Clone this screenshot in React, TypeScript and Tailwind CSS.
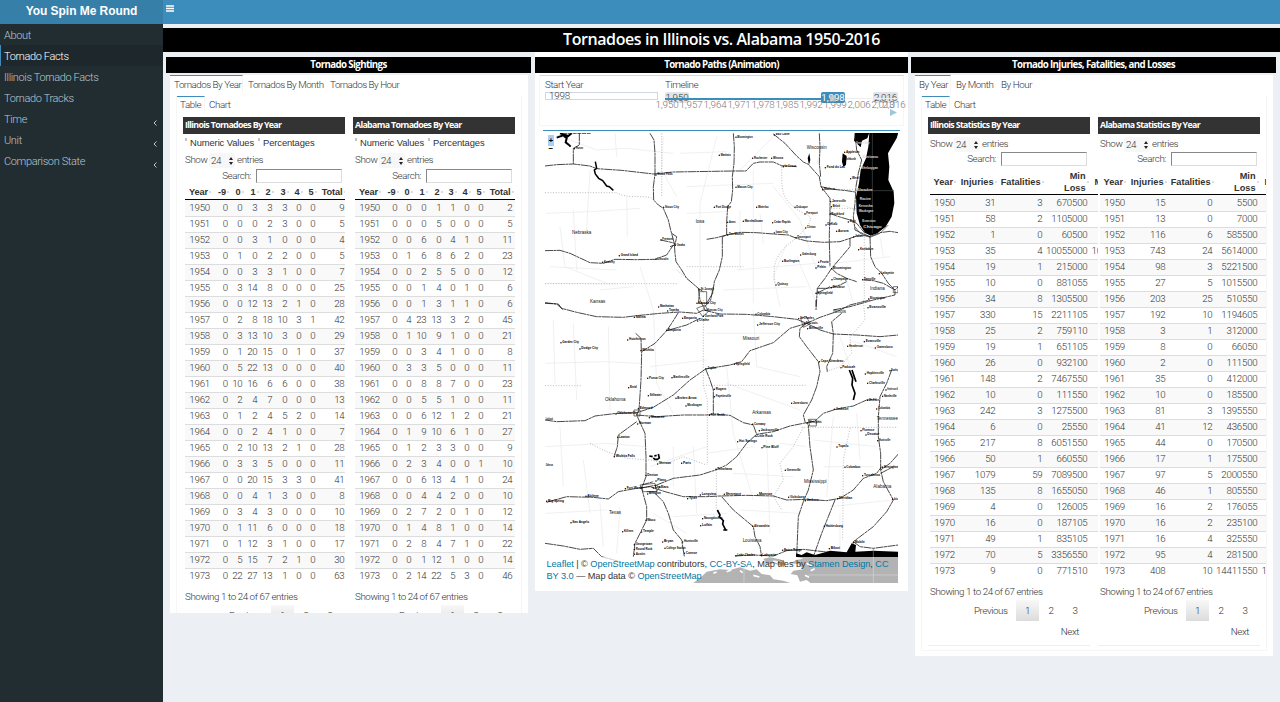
import React from "react";

const TORNADO_IL = `1950 0 0 3 3 3 0 0 9
1951 0 0 0 2 3 0 0 5
1952 0 0 3 1 0 0 0 4
1953 0 1 0 2 2 0 0 5
1954 0 0 3 3 1 0 0 7
1955 0 3 14 8 0 0 0 25
1956 0 0 12 13 2 1 0 28
1957 0 2 8 18 10 3 1 42
1958 0 3 13 10 3 0 0 29
1959 0 1 20 15 0 1 0 37
1960 0 5 22 13 0 0 0 40
1961 0 10 16 6 6 0 0 38
1962 0 2 4 7 0 0 0 13
1963 0 1 2 4 5 2 0 14
1964 0 0 2 4 1 0 0 7
1965 0 2 10 13 2 1 0 28
1966 0 3 3 5 0 0 0 11
1967 0 0 20 15 3 3 0 41
1968 0 0 4 1 3 0 0 8
1969 0 3 4 3 0 0 0 10
1970 0 1 11 6 0 0 0 18
1971 0 1 12 3 1 0 0 17
1972 0 5 15 7 2 1 0 30
1973 0 22 27 13 1 0 0 63`;

const TORNADO_AL = `1950 0 0 0 1 1 0 0 2
1951 0 0 0 5 0 0 0 5
1952 0 0 6 0 4 1 0 11
1953 0 1 6 8 6 2 0 23
1954 0 0 2 5 5 0 0 12
1955 0 0 1 4 0 1 0 6
1956 0 0 1 3 1 1 0 6
1957 0 4 23 13 3 2 0 45
1958 0 1 10 9 1 0 0 21
1959 0 0 3 4 1 0 0 8
1960 0 3 3 5 0 0 0 11
1961 0 0 8 8 7 0 0 23
1962 0 0 5 5 1 0 0 11
1963 0 0 6 12 1 2 0 21
1964 0 1 9 10 6 1 0 27
1965 0 1 2 3 3 0 0 9
1966 0 2 3 4 0 0 1 10
1967 0 0 6 13 4 1 0 24
1968 0 0 4 4 2 0 0 10
1969 0 2 7 2 0 1 0 12
1970 0 1 4 8 1 0 0 14
1971 0 2 8 4 7 1 0 22
1972 0 0 1 12 1 0 0 14
1973 0 2 14 22 5 3 0 46`;

const STATS_IL = `1950 31 3 670500 
1951 58 2 1105000 
1952 1 0 60500 
1953 35 4 10055000 10055
1954 19 1 215000 
1955 10 0 881055 
1956 34 8 1305500 
1957 330 15 2211105 
1958 25 2 759110 
1959 19 1 651105 
1960 26 0 932100 
1961 148 2 7467550 
1962 10 0 111550 
1963 242 3 1275500 
1964 6 0 25550 
1965 217 8 6051550 
1966 50 1 660550 
1967 1079 59 7089500 
1968 135 8 1655050 
1969 4 0 126005 
1970 16 0 187105 
1971 49 1 835105 
1972 70 5 3356550 
1973 9 0 771510 `;

const STATS_AL = `1950 15 0 5500 
1951 13 0 7000 
1952 116 6 585500 
1953 743 24 5614000 
1954 98 3 5221500 
1955 27 5 1015500 
1956 203 25 510550 
1957 192 10 1194605 
1958 3 1 312000 
1959 8 0 66050 
1960 2 0 111500 
1961 35 0 412000 
1962 10 0 185500 
1963 81 3 1395550 
1964 41 12 436500 
1965 44 0 170500 
1966 17 1 175500 
1967 97 5 2000550 
1968 46 1 805550 
1969 16 2 176055 
1970 16 2 235100 
1971 16 4 325550 
1972 95 4 281500 
1973 408 10 14411550 14411`;

const parse = (s: string) => s.split("\n").map((l) => l.split(" "));

const IL_GRID = "grid grid-cols-[25px_18px_14.5px_15px_15px_15px_14px_14px_29px]";
const AL_GRID = "grid grid-cols-[25px_17.5px_14px_15px_15px_14px_14px_14px_29px]";
const STAT_GRID = "grid grid-cols-[25px_40.5px_47px_45px_60px]";

function DataTable(p: { grid: string; heads: string[]; data: string; stats?: boolean }) {
  return (
    <div className={p.stats ? "w-[218px]" : "w-full"}>
      <div
        className={`${p.grid} items-center border-b border-black pt-[2px] font-['Liberation_Sans',sans-serif] text-[9.2px] leading-[12px] font-bold text-[#333] ${
          p.stats ? "h-[27px] tracking-[0px]" : "h-[17px] tracking-[-0.1px]"
        }`}
      >
        {p.heads.map((h, i) => (
          <div
            key={h}
            className={`flex items-center whitespace-pre ${
              i === 4 && p.stats ? "justify-start pl-[7px] text-left" : "justify-end text-right"
            }`}
          >
            <span>{h}</span>
            <span className="-mr-px ml-[1px] h-[2px] w-[2px] shrink-0 bg-[#dcdce4]" />
          </div>
        ))}
      </div>
      {parse(p.data).map((r, i) => (
        <div
          key={r[0]}
          className={`${p.grid} h-4 text-[9.7px] tracking-[-0.2px] ${
            i ? "border-t border-[#ddd] leading-[14px]" : "leading-[16px]"
          } ${i % 2 ? "bg-white" : "bg-[#f9f9f9]"}`}
        >
          {r.map((c, j) => (
            <span key={j} className={j === 4 && p.stats ? "pl-[4px] text-left" : "text-right"}>
              {c}
            </span>
          ))}
        </div>
      ))}
    </div>
  );
}

function Panel(p: {
  title: string;
  grid: string;
  heads: string[];
  data: string;
  stats?: boolean;
  clip: string;
}) {
  return (
    <section className="w-[162px] shrink-0 border-b border-[#eee]">
      <h3 className="h-[17px] bg-[#333] pl-[2px] font-['Open_Sans','Noto_Sans',sans-serif] text-[8.8px] leading-[16px] font-bold tracking-[-0.65px] whitespace-nowrap text-white">
        {p.title}
      </h3>
      {!p.stats && (
        <div className="flex h-[17px] pl-[2px] font-['Liberation_Sans',sans-serif] text-[9.4px] leading-[17px] font-normal tracking-[-0.1px] whitespace-nowrap text-[#333]">
          <i className="mt-[4px] mr-[3px] h-[3px] w-[2px] bg-[#c4c4c4]" />
          <span className="w-[68px]">Numeric Values</span>
          <i className="mt-[4px] mr-[3px] h-[3px] w-[2px] bg-[#c4c4c4]" />
          <span>Percentages</span>
        </div>
      )}
      <div className={`flex pl-[2px] leading-[14px] ${p.stats ? "mt-[3px] h-[15px]" : "mt-[2px] h-[16px]"}`}>
        <span className="w-6">Show</span>
        <span className="flex h-[15px] w-[26px] items-center rounded-[3px] bg-[#f7f7f7] pl-[2px]">
          24
          <svg className="ml-auto mr-[2px]" width="4" height="8" viewBox="0 0 4 8">
            <path d="M2 0 4 3H0zM2 8 0 5h4z" fill="#222" />
          </svg>
        </span>
        <span className="ml-[2px]">entries</span>
      </div>
      <div className={`flex justify-end pr-[3px] leading-[14px] ${p.stats ? "h-[15px]" : "h-[14px]"}`}>
        <span className="mr-[5px]">Search:</span>
        <span className="h-[14px] w-[86px] border border-t-[#888] border-r-[#ddd] border-b-[#ddd] border-l-[#888] bg-white" />
      </div>
      <div className={`relative ml-[2px] overflow-hidden ${p.stats ? "mt-[1px]" : ""} ${p.clip}`}>
        <DataTable grid={p.grid} heads={p.heads} data={p.data} stats={p.stats} />
      </div>
      <div className="h-[66px] pt-[6px] pl-[2px] leading-[14px]">
        Showing 1 to 24 of 67 entries
        <div className="mt-px flex h-[21px] items-center">
          <span className="ml-[44px] w-[42px]">Previous</span>
          <span className="flex h-[21px] w-[23px] items-center justify-center bg-linear-to-b from-[#f8f8f8] to-[#dcdcdc]">
            1
          </span>
          <span className="w-6 text-center">2</span>
          <span className="w-6 text-center">3</span>
        </div>
        <div className="pt-[4px] pr-[11px] text-right">Next</div>
      </div>
    </section>
  );
}

const LEVELS = ["Year", "-9", "0", "1", "2", "3", "4", "5", "Total"];
const STATS = ["Year", "Injuries", "Fatalities", "Min\nLoss", "Max"];

function InnerTabs(p: { children: React.ReactNode; wide: string }) {
  return (
    <div className={`mt-[3px] ml-[6px] border border-t-0 border-[#f6f6f6] ${p.wide}`}>
      <div className="flex h-[21px] leading-[16px]">
        <span className="h-[18px] w-[28px] border-t border-r border-t-[#3c8dbc] border-r-[#f4f4f4] pl-[3px]">Table</span>
        <span className="pt-px pl-[4px]">Chart</span>
      </div>
      <div className="flex gap-2 pl-[6px]">{p.children}</div>
    </div>
  );
}

/* Road, border and label data are in units of a third of a pixel. */
const ROADS_N = [
  "15,288 50,284 100,282 150,288 170,296 245,301 340,312 400,306 520,304 580,303 618,303 640,280 660,276 700,276 725,287 770,290",
  "118,190 118,225 100,235 100,282",
  "330,190 342,210 345,250 345,312 340,350 341,390 355,405 370,415 385,450 392,480 403,520 405,550 408,575 425,600 440,625 475,655 490,665",
  "580,190 583,230 582,280 577,320 578,360 574,395 563,410 560,455 560,495 547,500 547,560 538,600 523,635 518,670 500,700",
  "500,508 530,503 560,495 600,487 650,488 700,492 745,495 770,505 800,513 850,517 900,515 930,505 950,498 975,497 990,500 1020,488 1050,484 1075,488",
  "15,542 60,541 90,550 150,578 190,580 225,568 290,569 345,568 380,555 400,525",
  "700,192 735,220 770,258 790,276 805,283 820,300 838,320 843,350 870,385 870,440 868,490 868,515 870,590",
  "838,190 840,230 838,280 842,320",
  "843,350 880,358 920,362 945,366",
  "870,430 890,438 930,450 950,460 975,490",
  "930,505 930,530 905,560 875,595 855,625 832,655 828,720",
  "875,595 890,610 920,625 950,635",
  "832,655 865,655 900,645 920,635",
  "990,500 992,560 1005,590 1025,610 1045,640 1065,660",
  "830,670 870,650",
  "970,630 1000,632 1030,640 1065,660 1075,650",
  "880,720 930,710 1000,690 1065,675 1065,660",
  "945,190 950,240 965,270 955,310 948,350 945,400 940,440 945,480 990,500",
  "475,655 480,690 495,720 M518,660 512,690 490,715",
  "15,698 50,702 70,720",
  "362,510 385,515 405,520 M395,490 410,500 405,525 390,530",
];
const ROADS_S = [
  "15,10 55,12 65,25 110,37 170,50 250,52 290,47 360,40 420,36 470,40 490,30",
  "490,30 540,42 620,43 700,50 770,58 800,70",
  "415,38 395,70 380,92 345,130 305,155 303,240 297,330 290,345 315,400 318,470 318,530 305,565 320,620 320,660 300,700 285,730 280,770",
  "480,55 440,75 380,92 M287,100 303,115 304,155",
  "15,360 50,365 135,362 165,348 230,340 290,338 340,322 400,285 450,240 497,207 570,195 605,185 630,152 700,128 750,85 800,70 840,52 890,35 930,15 990,0",
  "290,345 350,350 430,345 500,345 520,342 570,346 610,368 640,375 650,403 700,395 750,378 790,370 825,363 850,340 890,327 940,318 980,300 1010,297",
  "497,207 510,240 520,270 520,342 M650,403 620,430 590,470 560,495 527,510 480,525 400,535 350,555 300,565",
  "20,607 80,590 160,592 205,597 235,575 290,565 330,560 375,575 430,590 500,590 540,588 620,586 700,588 740,600 800,598 860,602 900,595 940,570 970,535 1010,520 1025,500",
  "290,365 235,405 232,440 222,470",
  "345,580 370,605 385,640 400,690 425,720 433,770",
  "800,70 780,85 778,110 800,140 835,185 840,215 830,260 815,300 790,345 795,365 805,375 810,440 820,510 805,570 790,605 775,650 770,770",
  "800,70 840,90 880,102 950,105 1020,110 1075,105 M828,0 828,20 M905,40 875,65 880,102 878,160 860,200 862,215",
  "1055,210 1040,250 1020,290 1015,350 1015,410 1022,460 1022,510 1030,545 1060,600 1040,635 1000,680 940,725",
  "1075,462 1050,490 1022,510 M1022,520 1060,500",
  "545,590 580,630 640,680 645,710 660,740 665,770",
  "885,600 865,650 845,700 820,770",
  "15,730 70,738 120,748 160,745 185,770 240,785",
  "585,768 640,765 700,768 740,752 790,748 850,755 900,760",
  "940,725 960,740 1000,745 1075,735",
  "305,555 340,545 M320,575 350,575 360,560",
];
const MINOR_N = "M50,195 170,240 260,235 400,250 M20,430 150,425 300,415 M60,470 75,590 200,640 M30,590 230,600 M225,190 230,260 M150,300 140,480 M260,380 262,500 M370,200 365,300 410,380 M420,250 560,245 M440,430 560,425 M440,350 700,340 M640,300 640,700 M700,350 780,450 830,600 M590,600 830,580 M700,200 600,300 M530,200 480,400 480,640 M740,520 700,620 720,710 M15,640 230,642 M890,400 950,420 M850,220 830,280 M880,580 1050,560 M920,630 940,700 M1020,500 1030,560 M600,420 600,600 M660,430 670,520 M770,560 830,700 M100,420 110,600 M300,590 340,720 M550,660 800,650 M180,660 280,650";
const MINOR_S = "M40,60 45,250 M100,70 110,300 M205,80 210,330 M15,190 200,185 300,190 M330,200 500,180 M340,30 350,250 400,340 M15,440 200,430 320,440 M60,380 70,560 M130,480 150,640 M180,610 190,740 M240,620 230,760 M330,500 500,440 M400,440 400,560 M460,440 470,640 M560,200 580,400 640,600 M640,30 650,200 780,230 M500,100 740,100 M560,250 780,330 M680,420 690,700 M720,430 800,440 M820,420 1010,440 M880,350 860,590 M900,110 930,200 M930,120 1070,170 M950,340 960,480 M850,500 1000,500 M870,620 1060,600 M900,640 900,760 M15,640 200,630 M400,650 560,640 M340,640 440,700 M500,460 640,440 M580,520 760,530 M600,630 780,640";
const DOTTED_N = "M15,368H230M365,190V380M440,590H610M15,641H410M873,415H950M973,500V690M230,368C260,390 330,370 340,390M725,290C725,360 725,380 760,410S830,430 800,470S740,520 720,550S700,600 705,640M880,358 960,360M410,600 470,650";
const DOTTED_S = "M15,257H125M490,256H800M490,0V256L502,300V495M529,510V630M785,382H1075M930,385 910,480 908,720M790,382 760,440 720,490 730,540 700,590 725,630 M200,455 260,475 330,480 380,490 430,470 500,495M150,430 200,455M970,0 975,60 930,110 935,160 900,200 860,215";

const LABELS_N: [number, number, string, number][] = [
  [105,236,"Huron",22],[590,202,"Bloomington",46],[705,195,"Eau Claire",42],[540,256,"Mankato",30],[640,265,"Rochester",40],[697,265,"Winona",30],[732,290,"La Crosse",34],[590,352,"Mason City",46],[350,315,"Sioux Falls",46],[373,412,"Sioux City",42],[525,412,"Fort Dodge",46],[652,412,"Waterloo",32],[767,412,"Dubuque",34],[565,457,"Ames",20],[612,454,"Marshalltown",54],[700,458,"Cedar Rapids",50],[797,432,"Freeport",34],[799,474,"Clinton",26],[705,489,"Iowa City",36],[770,503,"Davenport",40],[565,495,"Des Moines",44],[365,510,"Fremont",32],[408,526,"Omaha",25],[240,557,"Grand Island",52],[190,577,"Kearney",32],[350,568,"Lincoln",33],[784,555,"Galesburg",42],[730,574,"Burlington",46],[838,577,"Peoria",26],[830,594,"Pekin",26],[877,596,"Bloomington",54],[878,629,"Champaign",44],[876,653,"Decatur",36],[710,645,"Quincy",32],[830,670,"Springfield",46],[916,247,"Appleton",40],[912,269,"Oshkosh",34],[858,293,"Fond du Lac",55],[934,326,"West Bend",44],[850,359,"Madison",34],[874,395,"Janesville",42],[876,410,"Beloit",22],[872,433,"Rockford",38],[860,465,"DeKalb",30],[892,484,"Aurora",32],[927,456,"Elgin",18],[943,501,"Joliet",22],[958,539,"Kankakee",40],[1020,611,"Lafayette",40],[970,629,"Danville",34],[988,687,"Bloomington",45],[986,713,"Evansville",50],[480,660,"St Joseph",40],[473,700,"Kansas City",52],[358,711,"Manhattan",42],
];
const LAKE_LABELS: [number, number, string, number][] = [
  [945,220,"Green Bay",42],[965,264,"Manitowoc",48],[962,296,"Sheboygan",50],[946,362,"Milwaukee",50],[957,390,"Racine",34],[954,411,"Kenosha",42],[954,425,"Waukegan",44],[965,455,"Evanston",40],[968,473,"Chicago",55],
];
const LABELS_S: [number, number, string, number][] = [
  [285,52,"Salina",30],[385,33,"Topeka",30],[430,55,"Emporia",38],[500,31,"Kansas City",46],[492,49,"Overland Park",56],[475,63,"Olathe",30],[650,43,"Columbia",38],[655,75,"Jefferson City",63],[778,56,"St Charles",42],[795,71,"St Louis",36],[805,86,"Belleville",42],[382,91,"Emporia",38],[265,120,"Hutchinson",50],[305,152,"Wichita",34],[65,128,"Garden City",50],[122,147,"Dodge City",50],[325,235,"Ponca City",45],[398,233,"Bartlesville",48],[327,287,"Stillwater",36],[410,295,"Broken Arrow",58],[440,318,"Muskogee",44],[268,263,"Enid",20],[585,193,"Springfield",42],[500,206,"Joplin",26],[525,268,"Rogers",32],[525,290,"Fayetteville",46],[510,346,"Fort Smith",42],[297,326,"Edmond",38],[230,342,"Oklahoma City",62],[295,372,"Norman",36],[330,353,"Shawnee",42],[235,412,"Lawton",32],[225,470,"Wichita Falls",58],[640,373,"Conway",34],[660,392,"Jacksonville",54],[650,409,"Little Rock",46],[595,425,"Hot Springs",54],[668,443,"Pine Bluff",46],[757,310,"Jonesboro",44],[885,328,"Jackson",38],[805,369,"Memphis",38],[840,185,"Cape Girardeau",68],[905,203,"Paducah",38],[978,222,"Hopkinsville",52],[985,250,"Clarksville",48],[1052,212,"Bowling",22],[1040,270,"Hendersonville",34],[1030,289,"Nashville",38],[985,301,"Dickson",30],[1012,327,"Columbia",36],[965,392,"Florence",36],[980,405,"Decatur",36],[1015,422,"Huntsville",34],[893,441,"Tupelo",30],[917,502,"Columbus",42],[738,511,"Greenville",42],[970,527,"Tuscaloosa",48],[1030,502,"Birmingham",44],[530,508,"Texarkana",44],[320,526,"Denton",32],[350,543,"Plano",26],[258,566,"Fort Worth",48],[342,564,"Dallas",42],[325,582,"Arlington",36],[355,492,"Sherman",36],[427,490,"Paris",24],[22,604,"Big Spring",48],[140,589,"Abilene",34],[445,596,"Tyler",24],[483,585,"Longview",44],[555,583,"Shreveport",46],[655,585,"Monroe",40],[748,592,"Vicksburg",44],[798,602,"Jackson",36],[895,596,"Meridian",40],[95,668,"San Angelo",50],[320,661,"Waco",24],[490,656,"Nacogdoches",56],[484,677,"Lufkin",30],[640,679,"Alexandria",46],[855,679,"Hattiesburg",52],[250,695,"Killeen",28],[307,696,"Temple",32],[285,734,"Georgetown",50],[285,749,"Round Rock",50],[285,763,"Austin",28],[370,726,"Bryan",28],[377,745,"College Station",58],[430,726,"Huntsville",42],[435,760,"Conroe",34],[590,767,"Lake Charles",54],[665,766,"Lafayette",42],[730,751,"Baton Rouge",54],[942,728,"Mobile",30],[870,746,"Biloxi",28],[15,360,"Lubbock",22],[15,496,"Odessa",22],[975,125,"Evansville",45],[925,139,"Henderson",42],[1008,144,"Owensboro",48],[1060,598,"Auburn",16],
];
const STATES_N: [number, number, string, number][] = [
  [800,236,"Wisconsin",60],[467,457,"Iowa",26],[96,491,"Nebraska",58],[990,660,"Indiana",44],[150,698,"Kansas",46],
];
const STATES_S: [number, number, string, number][] = [
  [608,118,"Missouri",50],[880,38,"Illinois",38],[195,303,"Oklahoma",62],[637,342,"Arkansas",56],[792,547,"Mississippi",68],[1000,563,"Alabama",54],[207,641,"Texas",36],[608,726,"Louisiana",56],[1010,360,"Tennessee",64],
];

const path = (s: string) => "M" + s;

function Labels({ items, state, fill }: { items: [number, number, string, number][]; state?: boolean; fill?: string }) {
  return (
    <g
      fontFamily="Liberation Sans, sans-serif"
      fontSize={state ? 16 : 11.5}
      fontWeight={state ? 400 : 700}
      fill={fill ?? (state ? "#111" : "#000")}
    >
      {items.map(([x, y, t, w], i) => (
        <g key={i}>
          {!state && !fill && <circle cx={x - 2} cy={y} r="2.2" fill="#000" />}
          <text x={x + (state ? 0 : 2)} y={y + 1} textLength={w} lengthAdjust="spacingAndGlyphs">
            {t}
          </text>
        </g>
      ))}
    </g>
  );
}

function TonerMap() {
  return (
    <svg className="block" width="353" height="450" viewBox="0 0 353 450">
      <rect width="353" height="450" fill="#fff" />
      <g transform="translate(-5 -63) scale(.33333)" fill="none">
        <path d={MINOR_N} stroke="#e9e9e9" strokeWidth="2" />
        <path d={DOTTED_N} stroke="#999" strokeWidth="2" strokeDasharray="3 5" />
        <path
          d="M988,188 985,230 978,265 962,300 957,340 948,380 950,430 960,465 975,488 992,497 1012,490 1037,470 1055,440 1063,400 1061,365 1045,330 1048,290 1044,250 1055,230 1070,205 1075,188zM945,188H988L982,205 966,212 962,232 942,212zM908,250 920,258 918,285 910,290 906,275zM808,250 803,265 807,285 811,270z"
          fill="#000"
        />
        <path d="M997,190V490M948,362H1062" stroke="#465050" strokeWidth="2" />
        <path d="M50,203 70,196 80,202 95,190 M60,190 85,198 M72,198 80,205 77,217 86,224 92,230" stroke="#000" strokeWidth="6" />
        <path d="M166,275 170,295 163,300 166,312 176,325 188,332 200,348 208,350 220,361" stroke="#000" strokeWidth="4.5" />
        <path d="M70,190H152" stroke="#222" strokeWidth="2.5" strokeDasharray="12 2" />
        {ROADS_N.map((r) => (
          <path key={r} d={path(r)} stroke="#111" strokeWidth="2.3" strokeDasharray="24 1.5 9 1.5" strokeLinejoin="round" />
        ))}
        <path d="M478,665h22v35h-25zM1060,650h14v18h-14zM945,470 960,490 990,502 1020,490 1045,465" stroke="#333" strokeWidth="2" />
        <Labels items={LABELS_N} />
        <Labels items={LAKE_LABELS} fill="#ddd" />
        <Labels items={STATES_N} state />
      </g>
      <g transform="translate(-5 167) scale(.33333)" fill="none">
        <path d={MINOR_S} stroke="#e9e9e9" strokeWidth="2" />
        <path d={DOTTED_S} stroke="#999" strokeWidth="2" strokeDasharray="3 5" />
        {ROADS_S.map((r) => (
          <path key={r} d={path(r)} stroke="#111" strokeWidth="2.3" strokeDasharray="24 1.5 9 1.5" strokeLinejoin="round" />
        ))}
        <path d="M782,55 800,50 810,72 790,82zM470,25 495,15 505,35 488,50zM282,330h18v18h-18zM805,358h24v20h-20zM300,555 345,550 350,575 310,575z" stroke="#333" strokeWidth="2" />
        <path d="M328,468 338,470M340,474 345,478 352,478 358,474 355,462M343,468 350,466M532,630 540,645 538,650 550,662 548,672 558,692M550,690H562M928,210 938,235 936,255 945,280 940,300M936,210 942,228 948,245" stroke="#000" strokeWidth="5" />
        <path
          d="M768,760 785,765 800,757 825,765 850,758 870,752 920,757 935,730 948,735 946,755 1000,752 1075,755V852H815L800,840 780,845 772,826 752,822 760,812 790,808 775,792 752,790 768,780 790,776 768,770zM455,852 480,835 500,815 540,808 570,810 600,802 630,812 650,808 665,822 690,826 700,838 730,842 760,852zM670,776 690,772 720,778 740,788 725,798 700,790 680,792z"
          fill="#000"
        />
        <path
          d="M560,815l14,-5M640,826l18,5M700,783l14,4M800,790l15,9M812,812l12,-6M795,826l12,6M600,812l8,6M520,820l10,-4"
          stroke="#fff"
          strokeWidth="5"
        />
        <path d="M612,800V850M805,825H1075M1000,745V850" stroke="#777" strokeWidth="2" />
        <Labels items={LABELS_S} />
        <Labels items={STATES_S} state />
      </g>
    </svg>
  );
}

const TICKS: [string, string][] = [
  ["left-[112px]", "1,950"], ["left-[136px]", "1,957"], ["left-[160px]", "1,964"], ["left-[184px]", "1,971"],
  ["left-[208px]", "1,978"], ["left-[232px]", "1,985"], ["left-[256px]", "1,992"], ["left-[280px]", "1,999"],
  ["left-[304px]", "2,006"], ["left-[328px]", "2,013"], ["left-[339px]", "2,016"],
];

function BarTitle({ children }: { children: React.ReactNode }) {
  return (
    <h2 className="h-4 bg-black text-center font-['Open_Sans','Noto_Sans',sans-serif] text-[9.7px] leading-[16px] font-bold tracking-[-0.62px] text-white">
      {children}
    </h2>
  );
}

const MENU = ["About", "Tornado Facts", "Illinois Tornado Facts", "Tornado Tracks", "Time", "Unit", "Comparison State"];

export default function App() {
  return (
    <div className="flex h-[702px] w-[1280px] overflow-hidden bg-[#ecf0f5] font-[Roboto,'Liberation_Sans',sans-serif] text-[9.8px] font-light tracking-[-0.43px] whitespace-nowrap text-[#333]">
      <aside className="w-[163px] shrink-0 bg-[#222d32]">
        <div className="h-6 bg-[#367fa9] text-center font-['Liberation_Sans',sans-serif] text-[12px] leading-[22px] font-bold tracking-[-0.05px] text-white">
          You Spin Me Round
        </div>
        {MENU.map((m, i) => (
          <div
            key={m}
            className={`flex h-[21px] items-center justify-between border-l pt-[3px] pr-[6px] pl-[3px] text-[11px] tracking-[-0.37px] ${
              i === 1 ? "border-[#3c8dbc] bg-[#1e282c] text-white" : "border-transparent text-[#b8c7ce]"
            }`}
          >
            <span>{m}</span>
            {i > 3 && (
              <svg className="mt-[5px]" width="4" height="6" viewBox="0 0 4 6">
                <path d="M3.5.5 1 3l2.5 2.5" fill="none" stroke="#b8c7ce" />
              </svg>
            )}
          </div>
        ))}
      </aside>
      <main className="w-[1117px]">
        <header className="h-6 bg-[#3c8dbc] pt-[5px] pl-[3px]">
          <svg width="8" height="7" viewBox="0 0 8 7">
            <path d="M0 1h8M0 3.5h8M0 6h8" stroke="#fff" strokeWidth="1.6" />
          </svg>
        </header>
        <h1 className="mt-1 h-6 bg-black text-center font-['Open_Sans','Noto_Sans',sans-serif] text-[16px] leading-[22px] font-semibold tracking-[-0.42px] text-white">
          Tornadoes in Illinois vs. Alabama 1950-2016
        </h1>
        <div className="flex items-start pl-[3px]">
          <div className="w-[365px] pt-[5px]">
            <BarTitle>Tornado Sightings</BarTitle>
            <div className="mt-[2px] mr-[3px] ml-1 h-[538px] overflow-hidden bg-white">
              <div className="flex h-[18px] leading-[18px]">
                <span className="w-[73px] border-t border-r border-t-[#3c8dbc] border-r-[#f4f4f4] pl-[4px] tracking-[-0.5px]">Tornados By Year</span>
                <span className="w-[82px] pt-px pl-[5px] tracking-[-0.5px]">Tornados By Month</span>
                <span className="pt-px pl-[5px] tracking-[-0.5px]">Tornados By Hour</span>
              </div>
              <InnerTabs wide="w-[346px]">
                <Panel title="Illinois Tornadoes By Year" grid={IL_GRID} heads={LEVELS} data={TORNADO_IL} clip="w-[160px]" />
                <Panel title="Alabama Tornadoes By Year" grid={AL_GRID} heads={LEVELS} data={TORNADO_AL} clip="w-[160px]" />
              </InnerTabs>
            </div>
          </div>

          <div className="ml-1 h-[539px] w-[373px] bg-white pt-[5px]">
            <BarTitle>Tornado Paths (Animation)</BarTitle>
            <div className="relative mx-1 mt-[2px] h-[51px] border border-[#f6f6f6] border-t-[#d2d6de]">
              <div className="flex pt-[2px] pl-[5px] leading-[14px]">
                <span className="w-[120px]">Start Year</span>
                <span>Timeline</span>
              </div>
              <div className="ml-[5px] h-[8px] w-[113px] border border-[#d2d6de] pl-[3px] leading-[6px] tracking-[-0.2px]">1998</div>
              <div className="absolute top-[16px] left-[125px] h-[11px] w-[24px] rounded-[2px] bg-[#e1e4e9] text-center leading-[12px] tracking-[-0.1px]">1,950</div>
              <div className="absolute top-[16px] left-[333px] h-[11px] w-[25px] rounded-[2px] bg-[#e1e4e9] text-center leading-[12px] tracking-[-0.1px]">2,016</div>
              <div className="absolute top-[22px] left-[125px] h-px w-[234px] bg-[#eee]" />
              <div className="absolute top-[22px] left-[125px] h-[2px] w-[166px] bg-[#3c8dbc]" />
              <div className="absolute top-[16px] left-[281px] h-[11px] w-[24px] rounded-[2px] bg-[#3c8dbc] text-center leading-[12px] font-normal tracking-[-0.1px] text-white">1,998</div>
              <div className="absolute top-[19px] left-[290px] h-[7px] w-[6px] rounded-[2px] bg-[#ccc]/80" />
              {TICKS.map(([pos, t]) => (
                <span key={t} className={`absolute top-[23px] w-[30px] text-center leading-[12px] tracking-[-0.1px] text-[#777] ${pos}`}>
                  {t}
                </span>
              ))}
              <svg className="absolute top-[33px] left-[350px]" width="7" height="7" viewBox="0 0 7 7">
                <path d="M0 0 7 3.5 0 7z" fill="#9bc8df" />
              </svg>
            </div>
            <div className="mx-2 mt-[4px] h-px bg-[#3c8dbc]" />
            <div className="relative mt-[2px] ml-[10px] h-[450px] w-[353px] overflow-hidden tracking-normal">
              <TonerMap />
              <div className="absolute top-[2px] left-[3px] w-[8px] bg-white text-center font-['Liberation_Mono',monospace] text-[8px] font-bold text-black">
                <div className="h-[11px] w-[6px] bg-[#a8d0f5] leading-[11px]">+</div>
                <div className="h-[5px] w-[6px] leading-[5px]">−</div>
              </div>
              <div className="absolute right-0 bottom-0 left-0 h-[26px] bg-white/70 pl-[1.5px] font-['Liberation_Sans',sans-serif] text-[9.2px] leading-[13px] font-normal tracking-[-0.05px] text-[#333]">
                <div className="pt-px leading-[12px]">
                  <b className="font-normal text-[#0078a8]">Leaflet</b> | © <b className="font-normal text-[#0078a8]">OpenStreetMap</b> contributors,{" "}
                  <b className="font-normal text-[#0078a8]">CC-BY-SA</b>, Map tiles by <b className="font-normal text-[#0078a8]">Stamen Design</b>,{" "}
                  <b className="font-normal text-[#0078a8]">CC</b>
                </div>
                <div>
                  <b className="font-normal text-[#0078a8]">BY 3.0</b> — Map data © <b className="font-normal text-[#0078a8]">OpenStreetMap</b>
                </div>
              </div>
            </div>
          </div>

          <div className="ml-[3px] w-[365px] pt-[5px]">
            <BarTitle>Tornado Injuries, Fatalities, and Losses</BarTitle>
            <div className="mt-[2px] mr-[3px] ml-1 h-[581px] overflow-hidden bg-white">
              <div className="flex h-[18px] leading-[18px]">
                <span className="w-[36px] border-t border-r border-t-[#3c8dbc] border-r-[#f4f4f4] pl-[4px]">By Year</span>
                <span className="w-[45px] pt-px pl-[5px]">By Month</span>
                <span className="pt-px pl-[5px]">By Hour</span>
              </div>
              <InnerTabs wide="w-[346px] h-[555px]">
                <Panel title="Illinois Statistics By Year" grid={STAT_GRID} heads={STATS} data={STATS_IL} stats clip="w-[168px]" />
                <Panel title="Alabama Statistics By Year" grid={STAT_GRID} heads={STATS} data={STATS_AL} stats clip="w-[166px]" />
              </InnerTabs>
            </div>
          </div>
        </div>
      </main>
    </div>
  );
}
